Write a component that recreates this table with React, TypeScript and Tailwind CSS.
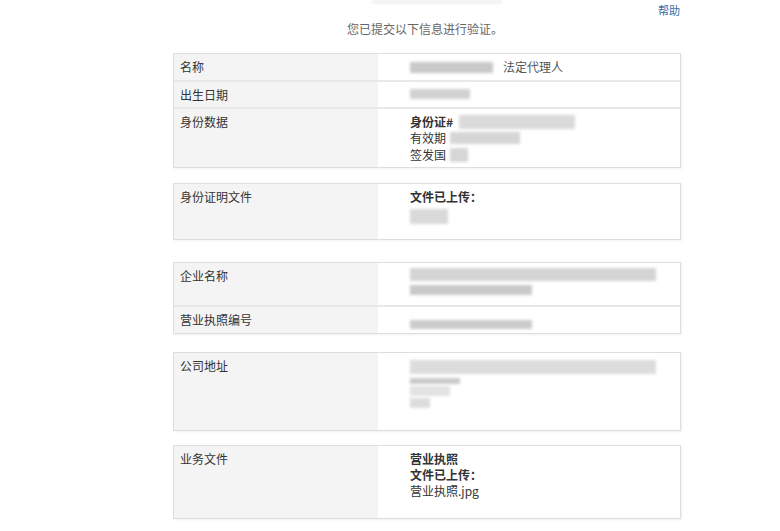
import React from "react";

const font = { fontFamily: '"Microsoft YaHei","Noto Sans CJK SC","Noto Sans",sans-serif' };

function Blur({ w, h = 12, className = "" }: { w: number; h?: number; className?: string }) {
  return (
    <span
      className={`inline-block align-middle bg-[#c9c9c9] blur-[1.5px] ${className}`}
      style={{ width: w, height: h }}
    />
  );
}

function Row({
  label,
  h,
  children,
  first,
}: {
  label: string;
  h: number;
  children?: React.ReactNode;
  first?: boolean;
}) {
  return (
    <div
      className={`flex ${first ? "" : "border-t-2 border-[#e8e8e8]"}`}
      style={{ height: h }}
    >
      <div className="w-[204px] shrink-0 bg-[#f4f4f4] pl-[6px] pt-[5px] text-[12px] leading-[16px] text-[#333]">
        {label}
      </div>
      <div className="flex-1 bg-white pl-[32px] pt-[5px] text-[12px] leading-[16px] text-[#333]">
        {children}
      </div>
    </div>
  );
}

function Table({ children, mt }: { children: React.ReactNode; mt: string }) {
  return (
    <div className={`w-[508px] border border-[#dedede] shadow-[1px_1px_2px_rgba(0,0,0,0.06)] ${mt}`}>
      {children}
    </div>
  );
}

export default function App() {
  return (
    <div className="w-[780px] h-[531px] bg-white relative overflow-hidden" style={font}>
      <div className="absolute left-[372px] top-0 w-[130px] h-[4px] bg-[#f2f2f2] blur-[1px]" />
      <div className="flex justify-end pr-[100px] pt-[3px]">
        <a className="text-[11px] leading-[14px] text-[#2f6ead]">帮助</a>
      </div>
      <div className="text-center text-[12px] leading-[16px] text-[#666] pt-[4px] pl-[70px]">
        您已提交以下信息进行验证。
      </div>
      <div className="pl-[173px]">
        <Table mt="mt-[16px]">
          <Row label="名称" h={26} first>
            <span className="flex items-center gap-[10px]">
              <Blur w={83} h={11} />
              <span className="text-[#555]">法定代理人</span>
            </span>
          </Row>
          <Row label="出生日期" h={27}>
            <span className="flex items-center pt-[2px]">
              <Blur w={60} h={10} className="bg-[#d2d2d2]" />
            </span>
          </Row>
          <Row label="身份数据" h={60}>
            <div className="flex items-center gap-[6px]">
              <span className="font-bold">身份证#</span>
              <Blur w={116} h={14} className="bg-[#dadada]" />
            </div>
            <div className="flex items-center gap-[4px]">
              <span>有效期</span>
              <Blur w={70} h={12} className="bg-[#d6d6d6]" />
            </div>
            <div className="flex items-center gap-[4px] pt-[1px]">
              <span>签发国</span>
              <Blur w={18} h={14} className="bg-[#d6d6d6]" />
            </div>
          </Row>
        </Table>
        <Table mt="mt-[15px]">
          <Row label="身份证明文件" h={55} first>
            <div className="font-bold">文件已上传：</div>
            <div className="pt-[2px]">
              <Blur w={38} h={15} className="bg-[#d9d9d9]" />
            </div>
          </Row>
        </Table>
        <Table mt="mt-[22px]">
          <Row label="企业名称" h={42} first>
            <div className="leading-[0]">
              <Blur w={246} h={13} className="bg-[#d4d4d4]" />
            </div>
            <div className="pt-[4px] leading-[0]">
              <Blur w={122} h={10} className="bg-[#c6c6c6]" />
            </div>
          </Row>
          <Row label="营业执照编号" h={28}>
            <div className="pt-[3px]">
              <Blur w={122} h={9} className="bg-[#cccccc]" />
            </div>
          </Row>
        </Table>
        <Table mt="mt-[18px]">
          <Row label="公司地址" h={77} first>
            <div className="pt-[2px] leading-[0]">
              <Blur w={246} h={14} className="bg-[#dcdcdc]" />
            </div>
            <div className="pt-[4px] leading-[0]">
              <Blur w={50} h={6} className="bg-[#bdbdbd]" />
            </div>
            <div className="pt-[2px] leading-[0]">
              <Blur w={40} h={10} className="bg-[#e2e2e2]" />
            </div>
            <div className="pt-[2px] leading-[0]">
              <Blur w={20} h={10} className="bg-[#dcdcdc]" />
            </div>
          </Row>
        </Table>
        <Table mt="mt-[14px]">
          <Row label="业务文件" h={72} first>
            <div className="font-bold">营业执照</div>
            <div className="font-bold">文件已上传：</div>
            <div>营业执照.jpg</div>
          </Row>
        </Table>
      </div>
    </div>
  );
}
